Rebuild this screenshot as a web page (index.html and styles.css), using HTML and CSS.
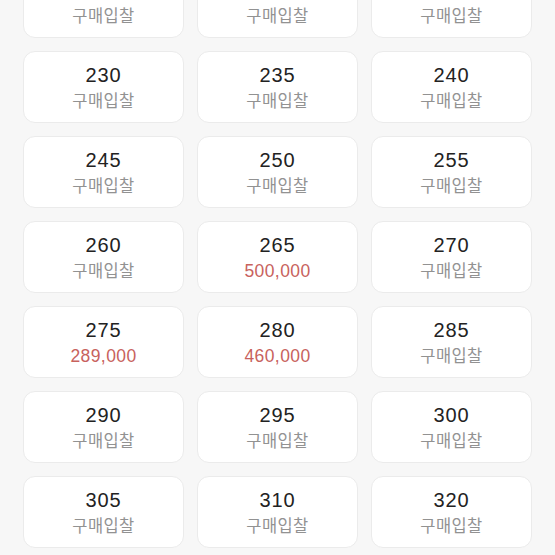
FILE: index.html
```html
<!DOCTYPE html>
<html>
<head>
    <title>사이즈 선택</title>
    <link rel="stylesheet" href="styles.css">
</head>
<body>
    <div class="size-list">
        <div class="size-card"><span class="size">215</span><span class="price">구매입찰</span></div>
        <div class="size-card"><span class="size">220</span><span class="price">구매입찰</span></div>
        <div class="size-card"><span class="size">225</span><span class="price">구매입찰</span></div>

        <div class="size-card"><span class="size">230</span><span class="price">구매입찰</span></div>
        <div class="size-card"><span class="size">235</span><span class="price">구매입찰</span></div>
        <div class="size-card"><span class="size">240</span><span class="price">구매입찰</span></div>

        <div class="size-card"><span class="size">245</span><span class="price">구매입찰</span></div>
        <div class="size-card"><span class="size">250</span><span class="price">구매입찰</span></div>
        <div class="size-card"><span class="size">255</span><span class="price">구매입찰</span></div>

        <div class="size-card"><span class="size">260</span><span class="price">구매입찰</span></div>
        <div class="size-card"><span class="size">265</span><span class="price sale">500,000</span></div>
        <div class="size-card"><span class="size">270</span><span class="price">구매입찰</span></div>

        <div class="size-card"><span class="size">275</span><span class="price sale">289,000</span></div>
        <div class="size-card"><span class="size">280</span><span class="price sale">460,000</span></div>
        <div class="size-card"><span class="size">285</span><span class="price">구매입찰</span></div>

        <div class="size-card"><span class="size">290</span><span class="price">구매입찰</span></div>
        <div class="size-card"><span class="size">295</span><span class="price">구매입찰</span></div>
        <div class="size-card"><span class="size">300</span><span class="price">구매입찰</span></div>

        <div class="size-card"><span class="size">305</span><span class="price">구매입찰</span></div>
        <div class="size-card"><span class="size">310</span><span class="price">구매입찰</span></div>
        <div class="size-card"><span class="size">320</span><span class="price">구매입찰</span></div>
    </div>
</body>
</html>
```

FILE: styles.css
```css
body {
    margin: 0;
    padding: 0;
    background-color: #f7f7f7;
    font-family: "Liberation Sans", "Noto Sans CJK KR", sans-serif;
    overflow: hidden;
}

/* list is scrolled, first row is cut off at the top */
.size-list {
    display: grid;
    grid-template-columns: repeat(3, 161px);
    grid-auto-rows: 72px;
    gap: 13px;
    padding: 0 23px;
    margin-top: -34px;
}

.size-card {
    box-sizing: border-box;
    background-color: #fff;
    border: 1px solid #ebebeb;
    border-radius: 12px;
    display: flex;
    flex-direction: column;
    justify-content: center;
    align-items: center;
    padding-top: 2px;
}

.size {
    font-size: 20px;
    line-height: 24px;
    letter-spacing: 0.8px;
    color: #222;
}

.price {
    font-size: 16.5px;
    line-height: 24px;
    letter-spacing: 0.4px;
    margin-top: 2px;
    color: #929292;
}

.price.sale {
    font-size: 17.5px;
    color: #c8625d;
}
```
